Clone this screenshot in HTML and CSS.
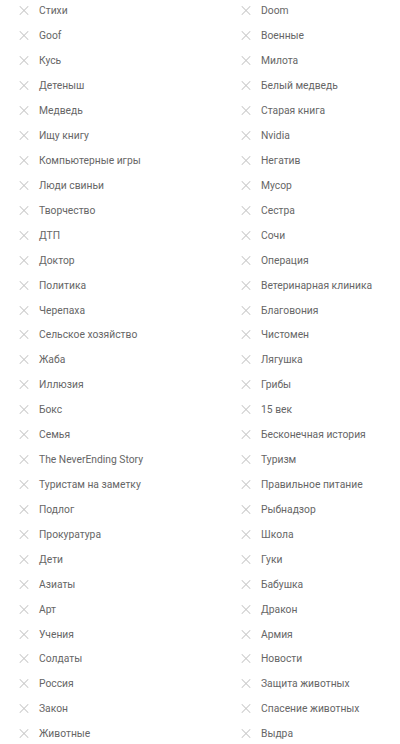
FILE: index.html
```html
<!DOCTYPE html>
<html lang="ru">
<head>
  <meta charset="UTF-8">
  <meta name="viewport" content="width=device-width,initial-scale=1">
  <title>Теги</title>
  <link rel="stylesheet" href="styles.css">
</head>
<body>
  <ul class="tag-list">
    <li class="tag"><span class="tag-x"></span>Стихи</li>
    <li class="tag"><span class="tag-x"></span>Doom</li>
    <li class="tag"><span class="tag-x"></span>Goof</li>
    <li class="tag"><span class="tag-x"></span>Военные</li>
    <li class="tag"><span class="tag-x"></span>Кусь</li>
    <li class="tag"><span class="tag-x"></span>Милота</li>
    <li class="tag"><span class="tag-x"></span>Детеныш</li>
    <li class="tag"><span class="tag-x"></span>Белый медведь</li>
    <li class="tag"><span class="tag-x"></span>Медведь</li>
    <li class="tag"><span class="tag-x"></span>Старая книга</li>
    <li class="tag"><span class="tag-x"></span>Ищу книгу</li>
    <li class="tag"><span class="tag-x"></span>Nvidia</li>
    <li class="tag"><span class="tag-x"></span>Компьютерные игры</li>
    <li class="tag"><span class="tag-x"></span>Негатив</li>
    <li class="tag"><span class="tag-x"></span>Люди свиньи</li>
    <li class="tag"><span class="tag-x"></span>Мусор</li>
    <li class="tag"><span class="tag-x"></span>Творчество</li>
    <li class="tag"><span class="tag-x"></span>Сестра</li>
    <li class="tag"><span class="tag-x"></span>ДТП</li>
    <li class="tag"><span class="tag-x"></span>Сочи</li>
    <li class="tag"><span class="tag-x"></span>Доктор</li>
    <li class="tag"><span class="tag-x"></span>Операция</li>
    <li class="tag"><span class="tag-x"></span>Политика</li>
    <li class="tag"><span class="tag-x"></span>Ветеринарная клиника</li>
    <li class="tag"><span class="tag-x"></span>Черепаха</li>
    <li class="tag"><span class="tag-x"></span>Благовония</li>
    <li class="tag"><span class="tag-x"></span>Сельское хозяйство</li>
    <li class="tag"><span class="tag-x"></span>Чистомен</li>
    <li class="tag"><span class="tag-x"></span>Жаба</li>
    <li class="tag"><span class="tag-x"></span>Лягушка</li>
    <li class="tag"><span class="tag-x"></span>Иллюзия</li>
    <li class="tag"><span class="tag-x"></span>Грибы</li>
    <li class="tag"><span class="tag-x"></span>Бокс</li>
    <li class="tag"><span class="tag-x"></span>15 век</li>
    <li class="tag"><span class="tag-x"></span>Семья</li>
    <li class="tag"><span class="tag-x"></span>Бесконечная история</li>
    <li class="tag"><span class="tag-x"></span>The NeverEnding Story</li>
    <li class="tag"><span class="tag-x"></span>Туризм</li>
    <li class="tag"><span class="tag-x"></span>Туристам на заметку</li>
    <li class="tag"><span class="tag-x"></span>Правильное питание</li>
    <li class="tag"><span class="tag-x"></span>Подлог</li>
    <li class="tag"><span class="tag-x"></span>Рыбнадзор</li>
    <li class="tag"><span class="tag-x"></span>Прокуратура</li>
    <li class="tag"><span class="tag-x"></span>Школа</li>
    <li class="tag"><span class="tag-x"></span>Дети</li>
    <li class="tag"><span class="tag-x"></span>Гуки</li>
    <li class="tag"><span class="tag-x"></span>Азиаты</li>
    <li class="tag"><span class="tag-x"></span>Бабушка</li>
    <li class="tag"><span class="tag-x"></span>Арт</li>
    <li class="tag"><span class="tag-x"></span>Дракон</li>
    <li class="tag"><span class="tag-x"></span>Учения</li>
    <li class="tag"><span class="tag-x"></span>Армия</li>
    <li class="tag"><span class="tag-x"></span>Солдаты</li>
    <li class="tag"><span class="tag-x"></span>Новости</li>
    <li class="tag"><span class="tag-x"></span>Россия</li>
    <li class="tag"><span class="tag-x"></span>Защита животных</li>
    <li class="tag"><span class="tag-x"></span>Закон</li>
    <li class="tag"><span class="tag-x"></span>Спасение животных</li>
    <li class="tag"><span class="tag-x"></span>Животные</li>
    <li class="tag"><span class="tag-x"></span>Выдра</li>
  </ul>
</body>
</html>
```

FILE: styles.css
```css
body {
  margin: 0;
  background: #fff;
  font-family: Roboto, "Liberation Sans", Arial, sans-serif;
  color: #666;
  overflow: hidden;
}
.tag-list {
  list-style: none;
  margin: -1.5px 0 0 0;
  padding: 0 0 0 19px;
  display: grid;
  grid-template-columns: 222px 1fr;
  grid-auto-rows: 24.93px;
}
.tag {
  display: flex; align-items: center;
  font-size: 10.3px;
  white-space: nowrap;
}
/* крестик удаления тега */
.tag-x {
  position: relative;
  width: 9px; height: 9px;
  margin-right: 11px;
  flex: none;
}
.tag-x::before, .tag-x::after {
  content: "";
  position: absolute; left: -1.5px; top: 4px;
  width: 12px; height: 1px;
  background: #c6c6c6;
  transform: rotate(45deg);
}
.tag-x::after { transform: rotate(-45deg); }
```
